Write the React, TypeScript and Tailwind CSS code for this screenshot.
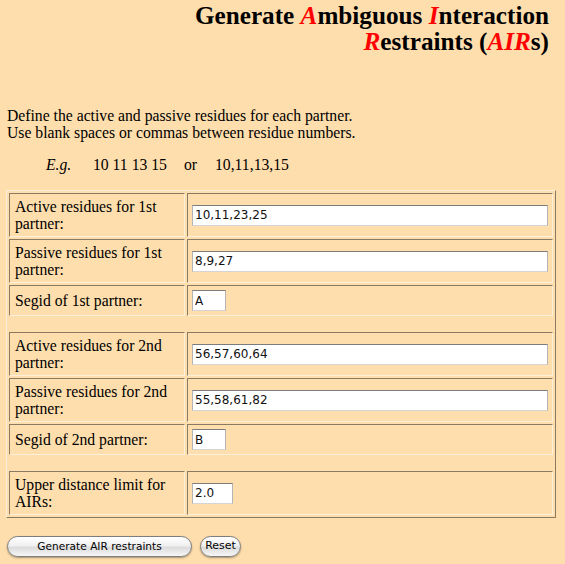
type Field = { label: string; value: string; width: string };

const group1: Field[] = [
    { label: "Active residues for 1st partner:", value: "10,11,23,25", width: "w-[357px]" },
    { label: "Passive residues for 1st partner:", value: "8,9,27", width: "w-[357px]" },
    { label: "Segid of 1st partner:", value: "A", width: "w-[34px]" },
];

const group2: Field[] = [
    { label: "Active residues for 2nd partner:", value: "56,57,60,64", width: "w-[357px]" },
    { label: "Passive residues for 2nd partner:", value: "55,58,61,82", width: "w-[357px]" },
    { label: "Segid of 2nd partner:", value: "B", width: "w-[34px]" },
];

const group3: Field[] = [
    { label: "Upper distance limit for AIRs:", value: "2.0", width: "w-[41px]" },
];

const cellCls =
    "border border-t-[#8a7a62] border-l-[#8a7a62] border-b-[#fdf0da] border-r-[#fdf0da] flex items-center";

const FieldRow = ({ field }: { field: Field }) => (
    <>
        <div className={`${cellCls} px-[5px] py-[4px] text-[15.7px] leading-[17px]`}>
            {field.label}
        </div>
        <div className={`${cellCls} px-[4px] py-[4px]`}>
            <input
                type="text"
                defaultValue={field.value}
                className={`${field.width} h-[21px] bg-white border border-[#b4b4b4] border-t-[#7c7c7c] border-b-[#d4d4d4] px-[2px] text-[12px] text-[#111] outline-none font-['DejaVu_Sans',sans-serif]`}
            />
        </div>
    </>
);

const Red = ({ children }: { children: string }) => (
    <span className="text-[#ff0000] italic">{children}</span>
);

const pill =
    "h-[21px] rounded-full border border-[#7d7d7d] bg-[linear-gradient(#ffffff,#f0f0f0_45%,#dcdcdc_55%,#f6f6f6)] shadow-[0_1px_2px_rgba(0,0,0,0.35)] text-black";

const App = () => {
    return (
        <div className="min-h-screen bg-[#ffdead] text-black font-['Liberation_Serif','Times_New_Roman',serif]">
            <h1 className="pt-[3px] pr-[16px] text-right text-[25.2px] leading-[26px] font-bold">
                Generate <Red>A</Red>mbiguous <Red>I</Red>nteraction
                <br />
                <Red>R</Red>estraints (<Red>AIR</Red>s)
            </h1>

            <div className="mt-[52px] pl-[7px] text-[15.7px] leading-[17px]">
                <p>Define the active and passive residues for each partner.</p>
                <p>Use blank spaces or commas between residue numbers.</p>
                <p className="mt-[15px] pl-[39px] flex">
                    <span className="italic w-[47px]">E.g.</span>
                    <span className="w-[91px]">10 11 13 15</span>
                    <span className="w-[31px]">or</span>
                    <span>10,11,13,15</span>
                </p>
            </div>

            <div className="mt-[17px] ml-[6px] w-[550px] border border-t-[#fdf0da] border-l-[#fdf0da] border-r-[#8a7a62] border-b-[#8a7a62] p-[2px] grid grid-cols-[176px_366px] gap-[2px]">
                {group1.map((f) => (
                    <FieldRow key={f.label} field={f} />
                ))}
                <div className="col-span-2 h-[12px]" />
                {group2.map((f) => (
                    <FieldRow key={f.label} field={f} />
                ))}
                <div className="col-span-2 h-[12px]" />
                {group3.map((f) => (
                    <FieldRow key={f.label} field={f} />
                ))}
            </div>

            <div className="mt-[18px] pl-[7px] flex items-center gap-[8px] font-['DejaVu_Sans',sans-serif] text-[10.6px]">
                <button className={`${pill} w-[185px]`}>Generate AIR restraints</button>
                <button className={`${pill} w-[41px] text-[11px]`}>Reset</button>
            </div>
        </div>
    );
};

export default App;
